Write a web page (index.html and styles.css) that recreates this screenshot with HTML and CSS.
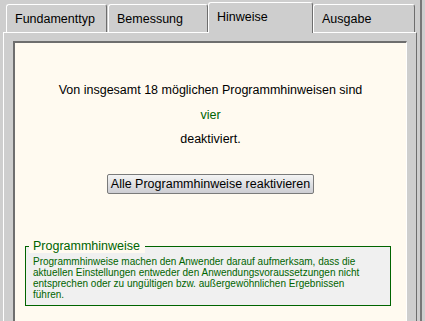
FILE: index.html
```html
<!DOCTYPE html>
<html lang="de">
<head>
    <meta charset="UTF-8">
    <title>Hinweise</title>
    <link rel="stylesheet" href="styles.css">
</head>
<body>
    <div class="window">
        <div class="tabs">
            <div class="tab tab-fundament">Fundamenttyp</div>
            <div class="tab tab-bemessung">Bemessung</div>
            <div class="tab tab-hinweise active">Hinweise</div>
            <div class="tab tab-ausgabe">Ausgabe</div>
        </div>

        <div class="panel">
            <div class="content">
                <p class="line">Von insgesamt 18 möglichen Programmhinweisen sind</p>
                <p class="line count">vier</p>
                <p class="line">deaktiviert.</p>

                <button class="reset">Alle Programmhinweise reaktivieren</button>

                <fieldset class="info">
                    <legend>Programmhinweise</legend>
                    <p>Programmhinweise machen den Anwender darauf aufmerksam, dass die aktuellen Einstellungen entweder den Anwendungsvoraussetzungen nicht entsprechen oder zu ungültigen bzw. außergewöhnlichen Ergebnissen<br>führen.</p>
                </fieldset>
            </div>
        </div>
    </div>
</body>
</html>
```

FILE: styles.css
```css
body {
    margin: 0;
    background: #cecece;
    font-family: 'Liberation Sans', Arial, sans-serif;
    color: #000;
    overflow: hidden;
}
.window {
    width: 420px;
    height: 321px;
    border-right: 2px solid #777;
    overflow: hidden;
}
.tabs {
    display: flex;
    align-items: flex-end;
    height: 32px;
    padding-left: 6px;
    box-sizing: border-box;
}
.tab {
    box-sizing: border-box;
    height: 28px;
    padding: 7px 0 0 8px;
    font-size: 12.5px;
    line-height: 15px;
    background: #cecece;
    border-top: 1px solid #fff;
    border-left: 1px solid #fff;
    border-right: 1px solid #6e6e6e;
    border-radius: 3px 3px 0 0;
}
.tab + .tab {
    margin-left: 1px;
}
.tab-fundament { width: 101px; }
.tab-bemessung { width: 100px; }
.tab-hinweise { width: 105px; }
.tab-ausgabe { width: 102px; }
.tab.active {
    position: relative;
    z-index: 1;
    height: 31px;
    margin: 0 -1px -1px 0;
}
.panel {
    margin-left: 3px;
    width: 414px;
    height: 300px;
    box-sizing: border-box;
    padding: 8px 9px 0 9px;
    border-top: 1px solid #fff;
    border-left: 1px solid #fff;
    border-right: 1px solid #6e6e6e;
}
.content {
    height: 320px;
    background: #fffaf0;
    border-top: 2px solid #6e6e6e;
    border-left: 2px solid #6e6e6e;
    border-right: 1px solid #fff;
    padding-top: 35px;
}
.line {
    margin: 0;
    text-align: center;
    font-size: 12.5px;
    line-height: 24.5px;
}
.count {
    color: #006400;
}
.reset {
    display: block;
    margin: 22px auto 0;
    height: 20px;
    padding: 0 3px;
    font-family: 'Liberation Sans', Arial, sans-serif;
    font-size: 12.5px;
    color: #000;
    background: linear-gradient(#f4f4f4, #cdcdd3);
    border: 1px solid #7a7a7a;
    border-radius: 2px;
}
.info {
    margin: 46px 0 0 10px;
    width: 366px;
    box-sizing: border-box;
    padding: 3px 7px 5px 7px;
    border: 1px solid #006400;
    background: #f0f0f0;
    color: #006400;
}
.info legend {
    margin-left: -4px;
    padding: 0 5px 0 4px;
    font-size: 12.5px;
    line-height: 13px;
    background: #fffaf0;
}
.info p {
    margin: 0;
    font-size: 10px;
    line-height: 11px;
}
```
